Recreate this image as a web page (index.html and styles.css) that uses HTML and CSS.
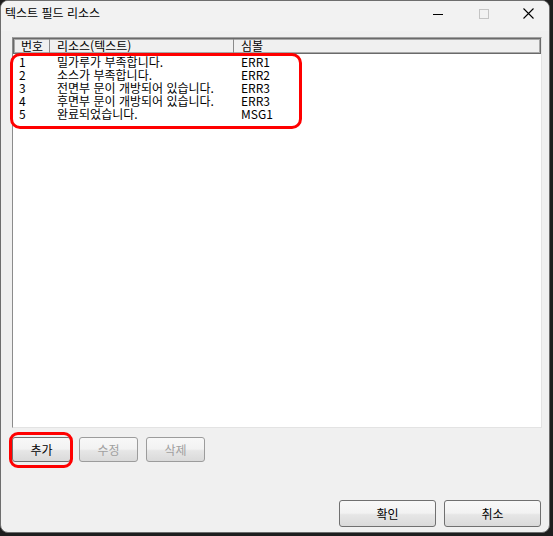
FILE: index.html
```html
<!DOCTYPE html>
<html lang="ko">
<head>
<meta charset="utf-8">
<title>텍스트 필드 리소스</title>
<link rel="stylesheet" href="styles.css">
</head>
<body>
<div class="window">
  <div class="titlebar">
    <span class="title">텍스트 필드 리소스</span>
    <div class="controls">
      <span class="ctl ctl-min"><svg width="10" height="10" viewBox="0 0 10 10"><path d="M0 5.5H10" stroke="#000" stroke-width="1"/></svg></span>
      <span class="ctl ctl-max"><svg width="10" height="10" viewBox="0 0 10 10"><rect x="0.5" y="0.5" width="9" height="9" fill="none" stroke="#c4c4c4" stroke-width="1"/></svg></span>
      <span class="ctl ctl-close"><svg width="11" height="11" viewBox="0 0 11 11"><path d="M0.5 0.5L10.5 10.5M10.5 0.5L0.5 10.5" stroke="#000" stroke-width="1.1"/></svg></span>
    </div>
  </div>
  <div class="client">
    <div class="list">
      <div class="header">
        <div class="hcell c1">번호</div>
        <div class="hcell c2">리소스(텍스트)</div>
        <div class="hcell c3">심볼</div>
      </div>
      <div class="rows">
        <div class="row"><span class="c1">1</span><span class="c2">밀가루가 부족합니다.</span><span class="c3">ERR1</span></div>
        <div class="row"><span class="c1">2</span><span class="c2">소스가 부족합니다.</span><span class="c3">ERR2</span></div>
        <div class="row"><span class="c1">3</span><span class="c2">전면부 문이 개방되어 있습니다.</span><span class="c3">ERR3</span></div>
        <div class="row"><span class="c1">4</span><span class="c2">후면부 문이 개방되어 있습니다.</span><span class="c3">ERR3</span></div>
        <div class="row"><span class="c1">5</span><span class="c2">완료되었습니다.</span><span class="c3">MSG1</span></div>
      </div>
      <div class="mark mark-rows"></div>
    </div>
    <div class="edit-bar">
      <div class="btn-wrap">
        <button class="btn btn-small">추가</button>
        <div class="mark mark-btn"></div>
      </div>
      <button class="btn btn-small" disabled>수정</button>
      <button class="btn btn-small" disabled>삭제</button>
    </div>
    <div class="footer">
      <button class="btn btn-wide">확인</button>
      <button class="btn btn-wide">취소</button>
    </div>
  </div>
</div>
</body>
</html>
```

FILE: styles.css
```css
html, body {
  margin: 0;
  padding: 0;
}

body {
  background: #1e1e1e;
  font-family: "Noto Sans CJK KR", "Noto Sans", sans-serif;
  font-size: 12px;
  color: #000;
}

.window {
  width: 550px;
  height: 533px;
  box-sizing: border-box;
  border: 1px solid #6e6e6e;
  border-radius: 8px;
  background: #f0f0f0;
  display: flex;
  flex-direction: column;
  overflow: hidden;
}

.titlebar {
  height: 30px;
  display: flex;
  align-items: flex-start;
  padding-left: 4px;
  background: #f2f2f2;
}

.title {
  line-height: 14px;
  padding-top: 5px;
}

.controls {
  margin-left: auto;
  display: flex;
}

.ctl {
  width: 46px;
  height: 25px;
  display: flex;
  align-items: center;
  justify-content: center;
}

.ctl-close {
  width: 42px;
}

.client {
  flex: 1;
  padding: 6px 0 0 11px;
  display: flex;
  flex-direction: column;
}

.list {
  position: relative;
  width: 530px;
  height: 391px;
  box-sizing: border-box;
  background: #fff;
  border-left: 1px solid #8c8c8c;
  border-top: 1px solid #a0a0a0;
  border-right: 1px solid #e3e3e3;
  border-bottom: 1px solid #e3e3e3;
}

.header {
  height: 16px;
  box-sizing: border-box;
  border: 1px solid #6a6a6a;
  box-shadow: inset 0 0 0 1px #a8a8a8;
  background: #f0f0f0;
  display: flex;
}

.hcell {
  box-sizing: border-box;
  line-height: 14px;
  padding-left: 7px;
  white-space: nowrap;
}

.hcell.c1 {
  width: 36px;
  border-right: 1px solid #8a8a8a;
}

.hcell.c2 {
  width: 184px;
  border-right: 1px solid #8a8a8a;
}

.hcell.c3 {
  flex: 1;
}

.rows {
  padding-top: 1px;
}

.row {
  display: flex;
  height: 13px;
  line-height: 13px;
  white-space: nowrap;
}

.row .c1 {
  width: 37px;
  box-sizing: border-box;
  padding-left: 6px;
}

.row .c2 {
  width: 184px;
  box-sizing: border-box;
  padding-left: 7px;
}

.row .c3 {
  padding-left: 7px;
}

.mark {
  position: absolute;
  box-sizing: border-box;
  border: 3px solid #f00;
  pointer-events: none;
}

.mark-rows {
  left: -3px;
  top: 15px;
  width: 292px;
  height: 76px;
  border-radius: 10px;
}

.edit-bar {
  margin-top: 9px;
  display: flex;
  gap: 8px;
}

.btn-wrap {
  position: relative;
  display: flex;
}

.mark-btn {
  left: -3px;
  top: -5px;
  width: 64px;
  height: 36px;
  border-radius: 9px;
}

.btn {
  margin: 0;
  padding: 0;
  font-family: inherit;
  font-size: 12px;
  font-weight: 400;
  color: #000;
  box-sizing: border-box;
  border: 1px solid #707070;
  border-radius: 3px;
  background: linear-gradient(#f8f8f8 0%, #f2f2f2 48%, #e6e6e6 55%, #dadada 100%);
}

.btn:disabled {
  color: #a0a0a0;
  border-color: #9c9c9c;
}

.btn-small {
  width: 59px;
  height: 25px;
}

.footer {
  margin-top: 38px;
  padding-right: 8px;
  display: flex;
  justify-content: flex-end;
  gap: 8px;
}

.btn-wide {
  width: 97px;
  height: 27px;
}
```
